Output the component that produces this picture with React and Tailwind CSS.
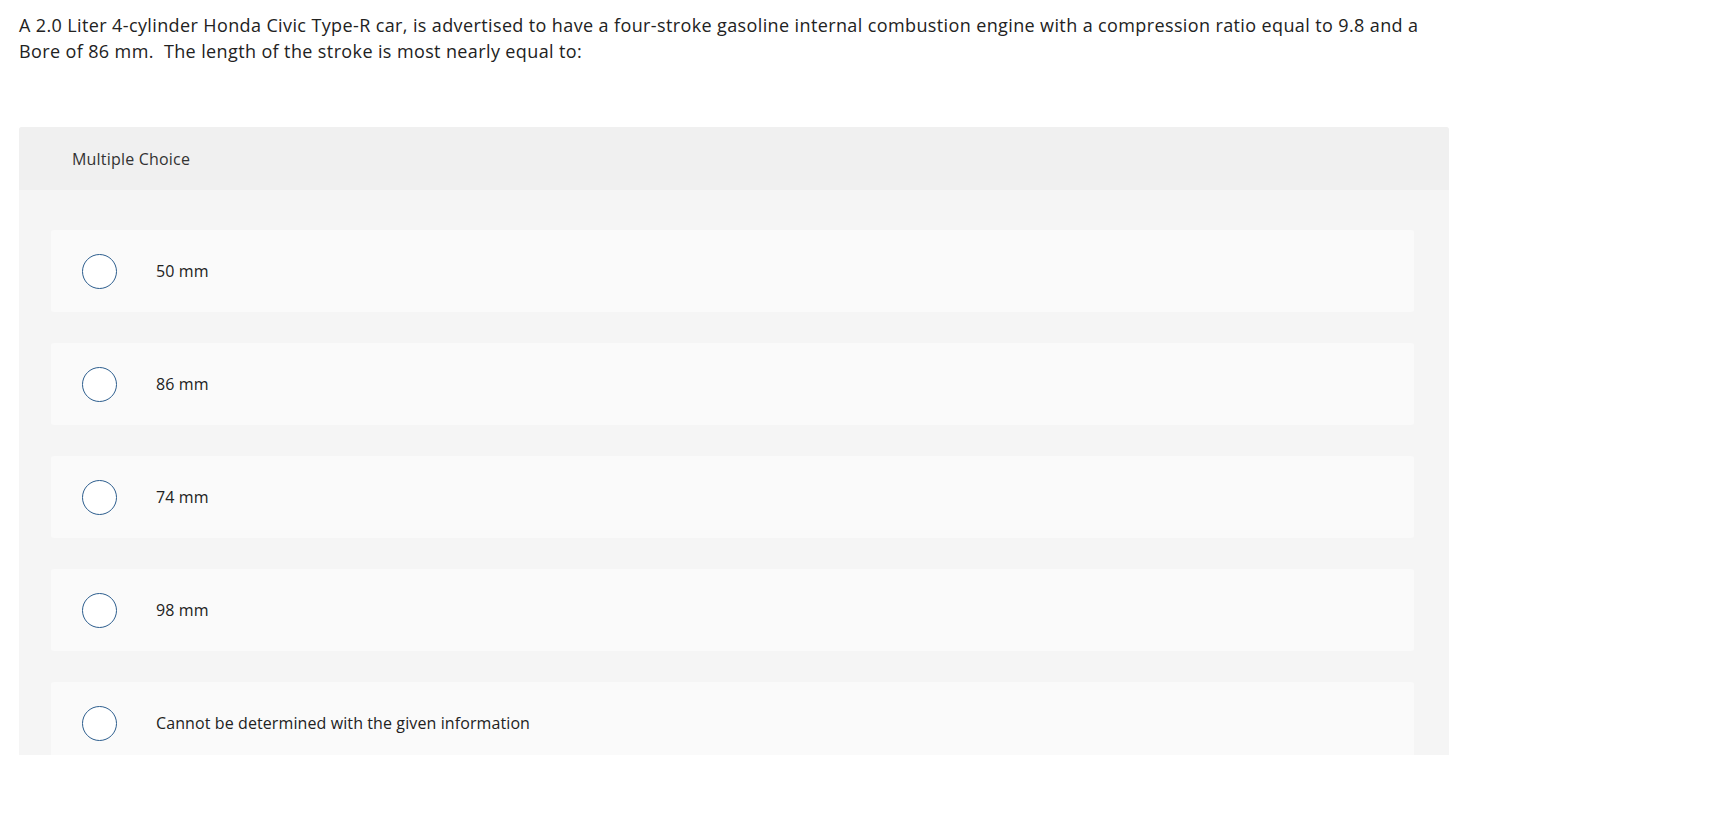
import React from "react";

const options = [
  "50 mm",
  "86 mm",
  "74 mm",
  "98 mm",
  "Cannot be determined with the given information",
];

const Option = ({ label }) => (
  <div className="h-[82px] shrink-0 rounded-[3px] bg-[#fafafa] flex items-center pl-[31px]">
    <span className="w-[35px] h-[35px] rounded-full border border-[#2d5e8e] bg-white shrink-0" />
    <span className="ml-[39px] text-[16px] tracking-[0.1px] text-[#222]">{label}</span>
  </div>
);

export default function App() {
  return (
    <div className="min-h-[831px] bg-white font-['Open_Sans',sans-serif] text-[#222]">
      {/* Question */}
      <p className="pt-3 pl-[19px] text-[18px] leading-[26px] tracking-[0.38px]">
        A 2.0 Liter 4-cylinder Honda Civic Type-R car, is advertised to have a four-stroke gasoline internal combustion engine with a compression ratio equal to 9.8 and a
        <br />
        Bore of 86 mm.&nbsp; The length of the stroke is most nearly equal to:
      </p>

      {/* Answer panel */}
      <div className="ml-[19px] mt-[63px] w-[1430px] h-[628px] overflow-hidden rounded-t-[3px] bg-[#f5f5f5]">
        <div className="h-[63px] bg-[#f0f0f0] flex items-center pl-[53px] text-[16px] tracking-[0.2px] text-[#333]">
          Multiple Choice
        </div>
        <div className="pt-10 pl-8 pr-[35px] flex flex-col gap-[31px]">
          {options.map((o) => (
            <Option key={o} label={o} />
          ))}
        </div>
      </div>
    </div>
  );
}
